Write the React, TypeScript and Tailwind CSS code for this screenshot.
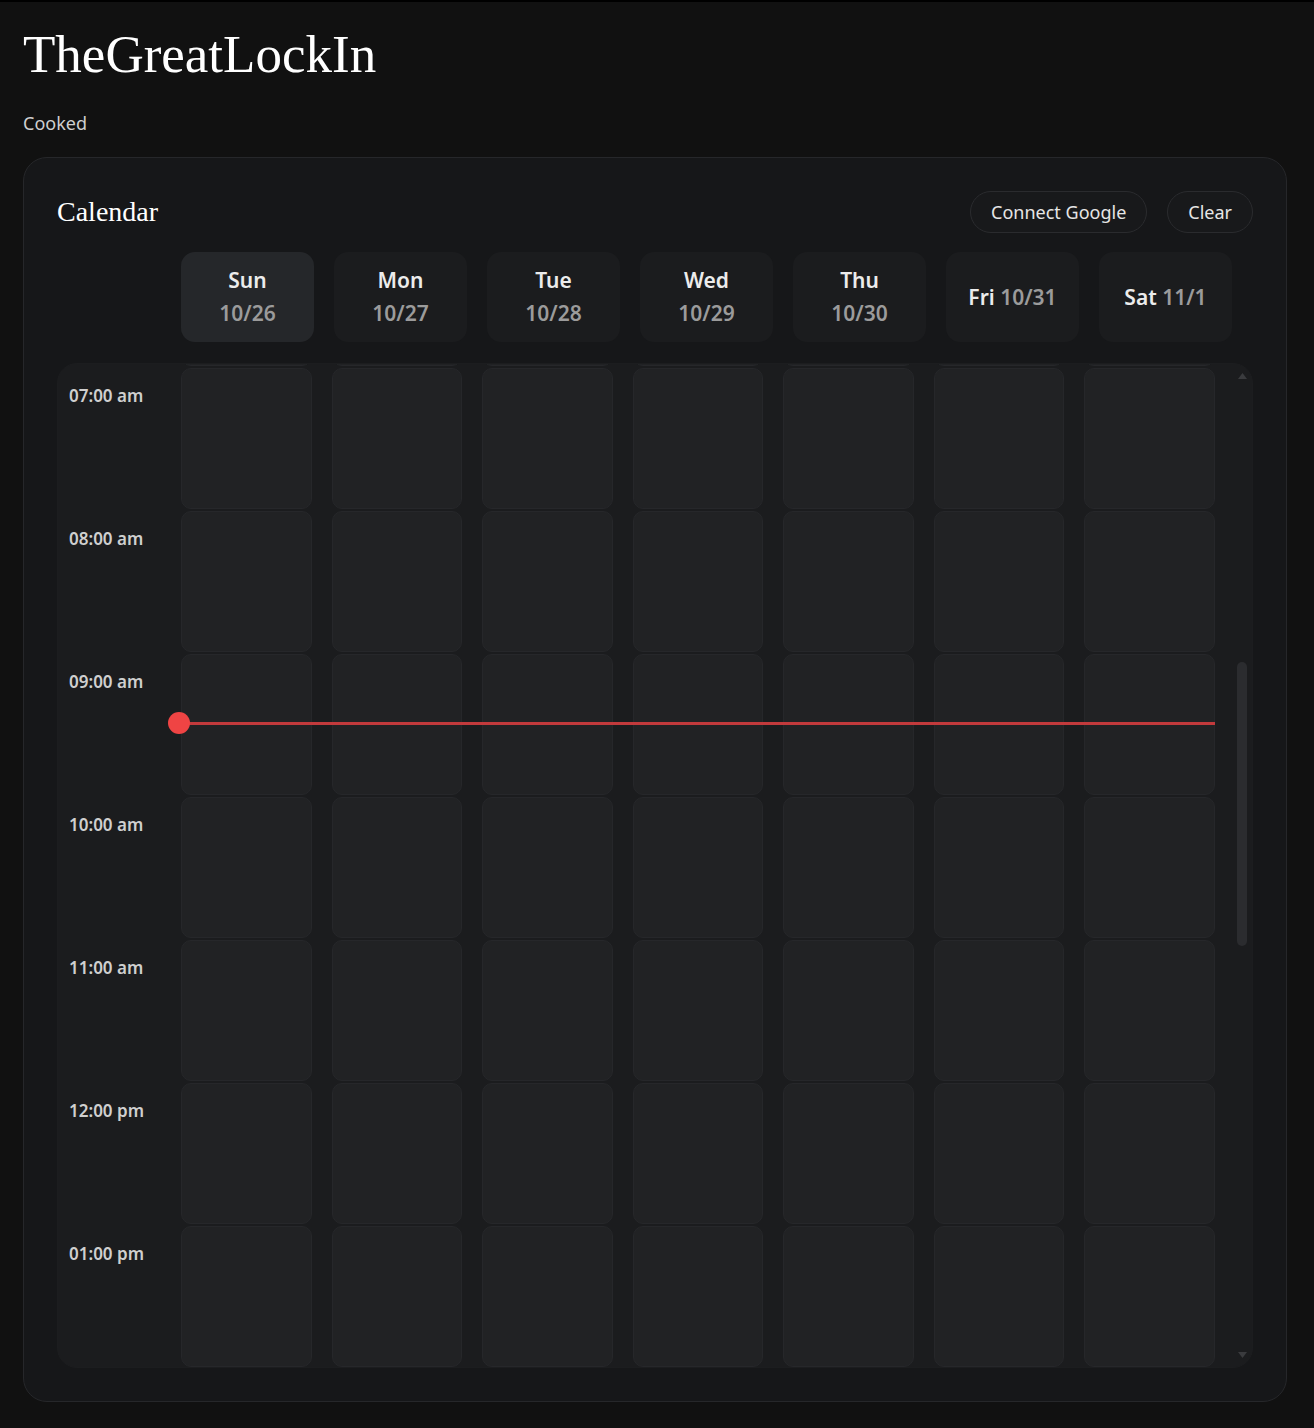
import { useLayoutEffect, useRef, useState } from "react";

const days = [
  { name: "Sun", date: "10/26", active: true, inline: false },
  { name: "Mon", date: "10/27", active: false, inline: false },
  { name: "Tue", date: "10/28", active: false, inline: false },
  { name: "Wed", date: "10/29", active: false, inline: false },
  { name: "Thu", date: "10/30", active: false, inline: false },
  { name: "Fri", date: "10/31", active: false, inline: true },
  { name: "Sat", date: "11/1", active: false, inline: true },
];

const ROW_H = 143;

const hours = Array.from({ length: 24 }, (_, i) => {
  const h = i % 12 === 0 ? 12 : i % 12;
  return `${String(h).padStart(2, "0")}:00 ${i < 12 ? "am" : "pm"}`;
});

const sans = "font-['Noto_Sans','Open_Sans',sans-serif]";
const serif = "font-['Liberation_Serif','DejaVu_Serif',serif]";

export default function App() {
  const scrollRef = useRef<HTMLDivElement>(null);
  const [thumb, setThumb] = useState({ top: 284, height: 282 });

  useLayoutEffect(() => {
    const el = scrollRef.current;
    if (!el) return;
    // start the view just above 7am
    el.scrollTop = 7 * ROW_H - 3;
    const track = el.clientHeight - 30;
    const height = (track * el.clientHeight) / el.scrollHeight;
    const top =
      (el.scrollTop / (el.scrollHeight - el.clientHeight)) * (track - height);
    setThumb({ top, height });
  }, []);

  return (
    <div className={`min-h-screen bg-[#111111] border-t-2 border-black pl-[23px] pr-[27px] pt-[22px] pb-[26px] ${sans}`}>
      {/* Header */}
      <h1 className={`${serif} text-[53px] leading-[60px] text-white`}>TheGreatLockIn</h1>
      <p className="mt-[27px] text-[18px] leading-[24px] text-[#cfcfcf]">Cooked</p>

      {/* Calendar card */}
      <div className="mt-[22px] rounded-[24px] border border-[#26272a] bg-[#161719] p-[33px]">
        <div className="flex items-center justify-between">
          <h2 className={`${serif} text-[28px] leading-[34px] text-white`}>Calendar</h2>
          <div className="flex gap-5">
            <button className="h-[42px] rounded-full border border-[#2a2b2e] bg-[#18191b] px-5 text-[18px] text-[#e6e6e6]">
              Connect Google
            </button>
            <button className="h-[42px] rounded-full border border-[#2a2b2e] bg-[#18191b] px-5 text-[18px] text-[#e6e6e6]">
              Clear
            </button>
          </div>
        </div>

        {/* Day headers */}
        <div className="mt-[19px] grid grid-cols-[104px_repeat(7,133px)] gap-x-5">
          <div />
          {days.map((d) => (
            <div
              key={d.name}
              className={`flex h-[90px] items-center justify-center rounded-[14px] text-center text-[21px] font-semibold leading-[33px] ${
                d.active ? "bg-[#25272a]" : "bg-[#1b1c1e]"
              }`}
            >
              {d.inline ? (
                <span>
                  <span className="text-[#ececec]">{d.name}</span>{" "}
                  <span className="text-[#9b9b9b]">{d.date}</span>
                </span>
              ) : (
                <div className="flex flex-col">
                  <span className="text-[#ececec]">{d.name}</span>
                  <span className="text-[#9b9b9b]">{d.date}</span>
                </div>
              )}
            </div>
          ))}
        </div>

        {/* Scrollable grid */}
        <div className="mt-[21px] flex h-[1005px] overflow-hidden rounded-[20px] border border-[#1c1d1f] bg-[#1b1c1e]">
          <div ref={scrollRef} className="flex-1 overflow-y-auto [scrollbar-width:none]">
            <div className="relative pr-[17px]">
              {hours.map((label) => (
                <div
                  key={label}
                  className="grid h-[143px] grid-cols-[103px_repeat(7,1fr)] gap-x-5"
                >
                  <div className="pl-[11px] pt-[17px] text-[17px] font-semibold leading-[24px] text-[#cfcfcf]">
                    {label}
                  </div>
                  {days.map((d) => (
                    <div key={d.name} className="py-px">
                      <div className="h-full rounded-[10px] border border-[#26272a] bg-[#212224]" />
                    </div>
                  ))}
                </div>
              ))}

              {/* now line */}
              <div className="absolute left-[121px] right-[17px] top-[1356px] h-[3px] bg-[#c23a3c]" />
              <div className="absolute left-[110px] top-[1346px] h-[22px] w-[22px] rounded-full bg-[#ef4444]" />
            </div>
          </div>

          {/* scrollbar */}
          <div className="flex w-[20px] flex-col items-center">
            <div className="flex h-[15px] items-end justify-center">
              <svg width="9" height="6" viewBox="0 0 9 6">
                <path d="M4.5 0L9 6H0z" fill="#3a3b3e" />
              </svg>
            </div>
            <div className="relative flex-1 w-full">
              <div
                className="absolute left-[5px] w-[10px] rounded-full bg-[#2b2c2f]"
                style={{ top: thumb.top, height: thumb.height }}
              />
            </div>
            <div className="flex h-[15px] items-start justify-center">
              <svg width="9" height="6" viewBox="0 0 9 6">
                <path d="M0 0H9L4.5 6z" fill="#3a3b3e" />
              </svg>
            </div>
          </div>
        </div>
      </div>
    </div>
  );
}
